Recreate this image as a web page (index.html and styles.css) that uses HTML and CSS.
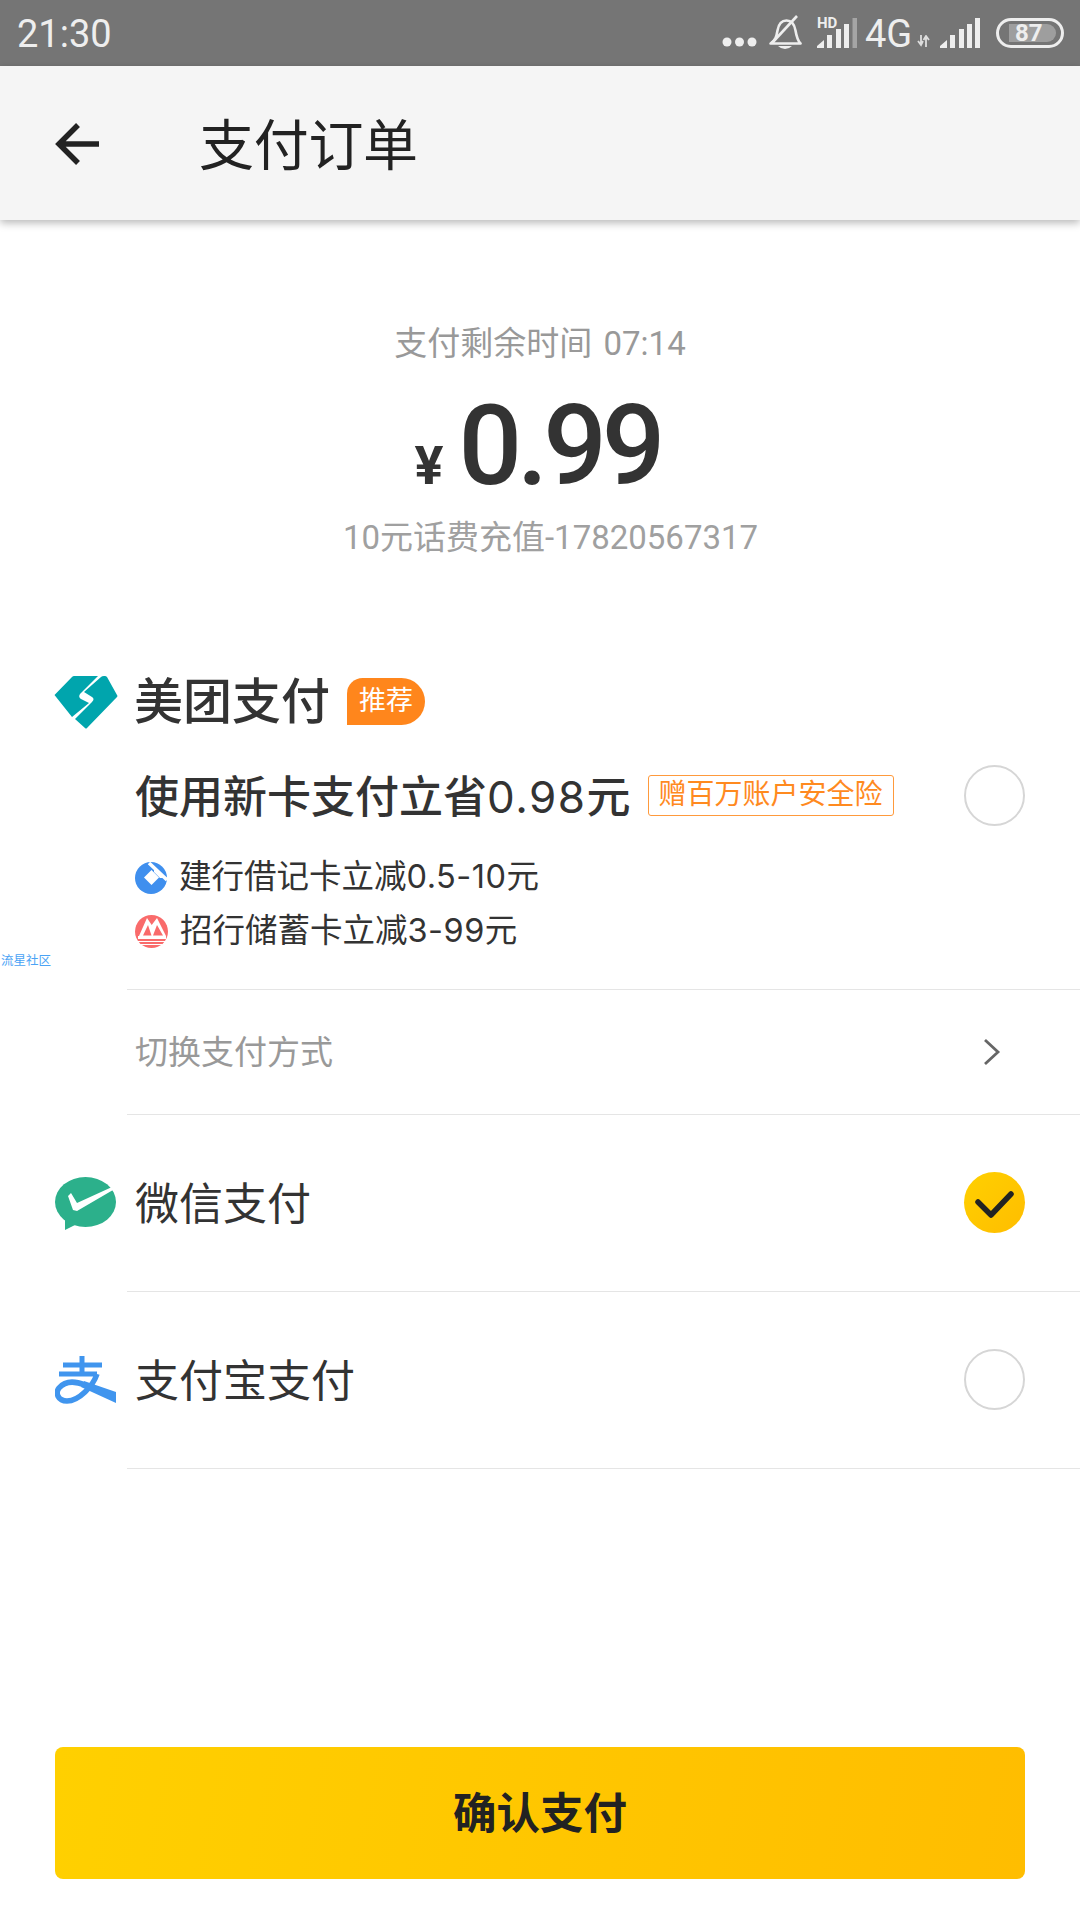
FILE: index.html
```html
<!DOCTYPE html>
<html lang="zh-CN">
<head>
<meta charset="utf-8">
<title>支付订单</title>
<link rel="stylesheet" href="styles.css">
</head>
<body>
<div class="page">
  <header class="status">
    <span class="clock">21:30</span>
    <div class="status-icons">
      <svg class="si-dots" width="35" height="12" viewBox="0 0 35 12"><circle cx="5" cy="6" r="4.500"/><circle cx="17.500" cy="6" r="4.500"/><circle cx="30" cy="6" r="4.500"/></svg>
      <svg class="si-bell" width="33" height="35" viewBox="0 0 33 35"><path d="M1.500 28.500c5-3 6-7 7-13 1-6 4-10 9-10 5 0 8 4 9 10 1 6 2 10 5 13z" fill="none" stroke="#eee" stroke-width="2.600" stroke-linejoin="round"/><path d="M9 31h14q-3 3-7 3t-7-3z" fill="#eee"/><path d="M28 1L3 28" stroke="#eee" stroke-width="2.600"/></svg>
      <div class="si-hd">
        <span class="hd">HD</span>
        <svg width="40" height="30" viewBox="0 0 40 30"><path class="bar" d="M0 30v-2l7-6v8zM10 30V17h5v13zM19 30V11h5v19zM27 30V6h5v24z"/><path class="bar" d="M35.500 30V0h4.500v30z" opacity=".4"/></svg>
      </div>
      <span class="net">4G</span>
      <svg class="si-arrows" width="13" height="12" viewBox="0 0 13 12"><path d="M4 0v9M1 6l3 4 2-4M9 12V3M6.500 5L9 1l3 4" fill="none" stroke="#ddd" stroke-width="1.800"/></svg>
      <svg class="si-sig" width="40" height="30" viewBox="0 0 40 30"><path class="bar" d="M0 30v-2l7-6v8zM10 30V17h5v13zM19 30V11h5v19zM27 30V6h5v24zM35 30V0h5v30z"/></svg>
      <div class="battery"><div class="battery-fill">87</div></div>
    </div>
  </header>

  <nav class="appbar">
    <svg class="back" width="44" height="44" viewBox="0 0 44 44"><path d="M44 22H5M23 3L4 22l19 19" fill="none" stroke="#222" stroke-width="5.500"/></svg>
    <h1 class="title">支付订单</h1>
  </nav>

  <section class="summary">
    <p class="countdown">支付剩余时间 07:14</p>
    <p class="amount"><span class="yen">¥</span><span class="num">0.99</span></p>
    <p class="order">10元话费充值-17820567317</p>
  </section>

  <section class="meituan">
    <div class="mt-head">
      <svg class="mt-logo" width="64" height="54" viewBox="0 0 64 54"><path fill="#00a5ad" d="M.5 19L18 1q1-1 2-1h24L26 18q-2 3 1 5l8 4-17 14z"/><path fill="#00a5ad" d="M47 1q1-1 3-1h1q1 0 2 1l10 18q1 1 0 2L33 52q-1 1-2 0L21 43l17-17q3-3 0-5l-8-5z"/></svg>
      <span class="mt-name">美团支付</span>
      <span class="mt-badge">推荐</span>
    </div>
    <div class="mt-main">
      <span class="mt-offer">使用新卡支付立省<span class="offer-num">0.98</span>元</span>
      <span class="mt-tag">赠百万账户安全险</span>
      <span class="radio"></span>
    </div>
    <ul class="promos">
      <li class="promo">
        <svg class="promo-icon" width="32" height="33" viewBox="0 0 32 33"><circle cx="16" cy="17" r="16" fill="#3f8fee"/><path fill="#fff" d="M16.500 9L24 16.500 16.500 24 9 16.500z"/><path d="M14 2L32 19" stroke="#fff" stroke-width="3.500"/><path d="M19 11l6 6h7l-13-9z" fill="#fff"/></svg>
        <span>建行借记卡立减<span class="promo-num">0.5-10</span>元</span>
      </li>
      <li class="promo">
        <svg class="promo-icon" width="33" height="33" viewBox="0 0 33 33"><circle cx="16.500" cy="16.500" r="16.500" fill="#f96b6b"/><path fill="#fff" d="M4 21L12 3l4.700 7L22 3l9 18v3H3v-3z"/><path fill="#f96b6b" d="M8 20.500L13 10l3.500 10.500zM18 20.500L22 10l6 10.500z"/><path stroke="#fff" d="M3 26.500h27M6 29.500h21"/></svg>
        <span>招行储蓄卡立减<span class="promo-num">3-99</span>元</span>
      </li>
    </ul>
    <span class="watermark">流星社区</span>
  </section>

  <section class="switch">
    <span class="switch-label">切换支付方式</span>
    <svg class="chevron" width="20" height="28" viewBox="0 0 20 28"><path d="M3 2l13 12L3 26" fill="none" stroke="#666" stroke-width="2.800"/></svg>
  </section>

  <section class="method">
    <div class="method-icon">
      <svg width="61" height="54" viewBox="0 0 61 54"><ellipse cx="30.500" cy="25" rx="30.500" ry="25" fill="#2cb08b"/><path fill="#2cb08b" d="M10 40v13l14-7z"/><path fill="#fff" d="M13 19l5 14 4 1 36-21-1-3-35 16-6-10z"/></svg>
    </div>
    <div class="method-body">
      <span class="method-name">微信支付</span>
      <span class="radio checked"><svg width="61" height="61" viewBox="0 0 61 61"><path d="M14 30l13 13 20-21" fill="none" stroke="#222" stroke-width="5.500" stroke-linecap="round" stroke-linejoin="round"/></svg></span>
    </div>
  </section>

  <section class="method">
    <div class="method-icon">
      <svg width="61" height="50" viewBox="0 0 61 50"><path d="M8 9h39M27 0v18M4 18h38" fill="none" stroke="#4095ee" stroke-width="5"/><path d="M42 18C38 30 24 45 12 45 3 45 0 37 4 32c6-7 16-7 26-3" fill="none" stroke="#4095ee" stroke-width="5.500"/><path fill="#4095ee" d="M29 25l32 11v11L26 31z"/></svg>
    </div>
    <div class="method-body">
      <span class="method-name">支付宝支付</span>
      <span class="radio"></span>
    </div>
  </section>

  <button class="pay" type="button">确认支付</button>
</div>
</body>
</html>
```

FILE: styles.css
```css
* { box-sizing: border-box; }
html, body { margin: 0; padding: 0; }
body {
  background: #fff;
  color: #333;
  font-family: Roboto, "Noto Sans CJK SC", sans-serif;
}
p, h1, ul { margin: 0; padding: 0; }
ul { list-style: none; }

.page {
  width: 1080px;
  height: 1920px;
  display: flex;
  flex-direction: column;
  overflow: hidden;
  position: relative;
}

/* status bar */
.status {
  height: 66px;
  background: #757575;
  display: flex;
  align-items: center;
  justify-content: space-between;
  padding: 0 16px 0 17px;
  color: #eee;
}
.clock { font-size: 38px; line-height: 1; margin-top: 2px; }
.status-icons { display: flex; align-items: flex-start; height: 66px; }
.status-icons svg { fill: #eee; flex: none; }
.si-dots { margin-top: 36px; }
.si-bell { margin: 15px 0 0 12px; }
.si-hd { position: relative; width: 40px; height: 30px; margin: 18px 0 0 15px; }
.si-hd svg { display: block; }
.hd { position: absolute; left: 0; top: -2px; font-size: 15px; line-height: 14px; font-weight: 700; color: #eee; }
.net { font-size: 38px; line-height: 36px; margin: 16px 0 0 8px; width: 47px; }
.si-arrows { margin: 35px 0 0 5px; }
.si-sig { margin: 18px 0 0 10px; }
.battery {
  width: 68px;
  height: 30px;
  margin: 18px 0 0 16px;
  border: 3px solid #eee;
  border-radius: 15px;
  padding: 3px 5px 3px 10px;
}
.battery-fill {
  height: 18px;
  background: rgba(255, 255, 255, .3);
  border-radius: 0 9px 9px 0;
  font-size: 24px;
  line-height: 18px;
  font-weight: 700;
  color: #eee;
  padding-left: 6px;
}

/* app bar */
.appbar {
  height: 154px;
  background: #f5f5f5;
  display: flex;
  align-items: center;
  padding-left: 55px;
  box-shadow: 0 3px 8px rgba(0, 0, 0, .28);
  position: relative;
}
.back { flex: none; margin-top: 2px; }
.title { font-size: 55px; line-height: 60px; font-weight: 400; color: #222; margin: 6px 0 0 100px; letter-spacing: -.3px; }

/* summary */
.summary { padding-top: 104px; text-align: center; }
.countdown { font-size: 33px; line-height: 40px; color: #999; word-spacing: 3px; }
.amount {
  display: flex;
  justify-content: center;
  align-items: baseline;
  height: 120px;
  margin-top: 22px;
  padding-right: 5px;
  line-height: 120px;
  color: #333;
}
.yen { font-size: 54px; font-weight: 700; margin-right: 15px; }
.num { font-size: 112px; font-weight: 500; letter-spacing: -5px; }
.order { font-size: 33px; line-height: 40px; color: #a0a0a0; margin-top: 12px; padding-left: 21px; }

/* meituan */
.meituan { margin-top: 118px; position: relative; }
.mt-head { display: flex; align-items: center; height: 54px; padding-left: 54px; }
.mt-logo { flex: none; }
.mt-name { font-size: 49px; line-height: 54px; margin-left: 16px; font-weight: 500; }
.mt-badge {
  width: 78px;
  height: 47px;
  margin: -4px 0 0 17px;
  background: #ff861c;
  border-radius: 16px 24px 24px 0;
  color: #fff;
  font-size: 27px;
  line-height: 47px;
  text-align: center;
}
.mt-main {
  display: flex;
  align-items: center;
  height: 61px;
  margin-top: 35px;
  padding: 0 55px 0 135px;
}
.mt-offer { font-family: Inter, "Noto Sans CJK SC", sans-serif; font-size: 44px; line-height: 60px; font-weight: 500; margin-top: 2px; }
.offer-num { font-weight: 400; letter-spacing: 1.500px; }
.mt-tag {
  width: 246px;
  height: 41px;
  margin-left: 17px;
  border: 1.500px solid #ff9a3c;
  border-radius: 3px;
  color: #ff8a1f;
  font-size: 28px;
  line-height: 37px;
  text-align: center;
}
.radio {
  width: 61px;
  height: 61px;
  flex: none;
  margin: -1px 0 0 auto;
  border: 2.500px solid #d6d6d6;
  border-radius: 50%;
}
.radio.checked {
  border: 0;
  background: linear-gradient(135deg, #ffd000, #ffbd00);
}
.radio.checked svg { display: block; }
.promos {
  display: flex;
  flex-direction: column;
  gap: 18px;
  margin: 33px 0 0 127px;
  padding: 0 0 40px 8px;
  border-bottom: 1.500px solid #e5e5e5;
}
.promo {
  display: flex;
  align-items: center;
  height: 36px;
  font-family: Inter, "Noto Sans CJK SC", sans-serif;
  font-size: 32.500px;
  line-height: 36px;
}
.promo-num { letter-spacing: .5px; }
.promo-icon { flex: none; margin-right: 12px; }
.watermark {
  position: absolute;
  left: 1px;
  top: 278px;
  font-size: 12.500px;
  line-height: 14px;
  color: #4aa3f5;
}

/* switch */
.switch {
  height: 125px;
  margin-left: 127px;
  padding: 0 78px 0 8px;
  display: flex;
  align-items: center;
  justify-content: space-between;
  border-bottom: 1.500px solid #e5e5e5;
}
.switch-label { font-size: 33px; color: #999; margin-top: -4px; }

/* methods */
.method { display: flex; height: 177px; }
.method-icon {
  width: 127px;
  flex: none;
  padding-left: 55px;
  display: flex;
  align-items: center;
}
.method-icon svg { display: block; }
.method-body {
  flex: 1;
  display: flex;
  align-items: center;
  padding: 0 55px 0 8px;
  border-bottom: 1.500px solid #e5e5e5;
}
.method-name { font-size: 44px; margin-top: -5px; }

/* button */
.pay {
  height: 132px;
  margin: auto 55px 41px;
  border: 0;
  border-radius: 8px;
  background: linear-gradient(100deg, #ffd000, #ffbd00);
  color: #222;
  font-family: inherit;
  font-size: 43.500px;
  font-weight: 700;
  padding: 0 0 6px;
}
```
